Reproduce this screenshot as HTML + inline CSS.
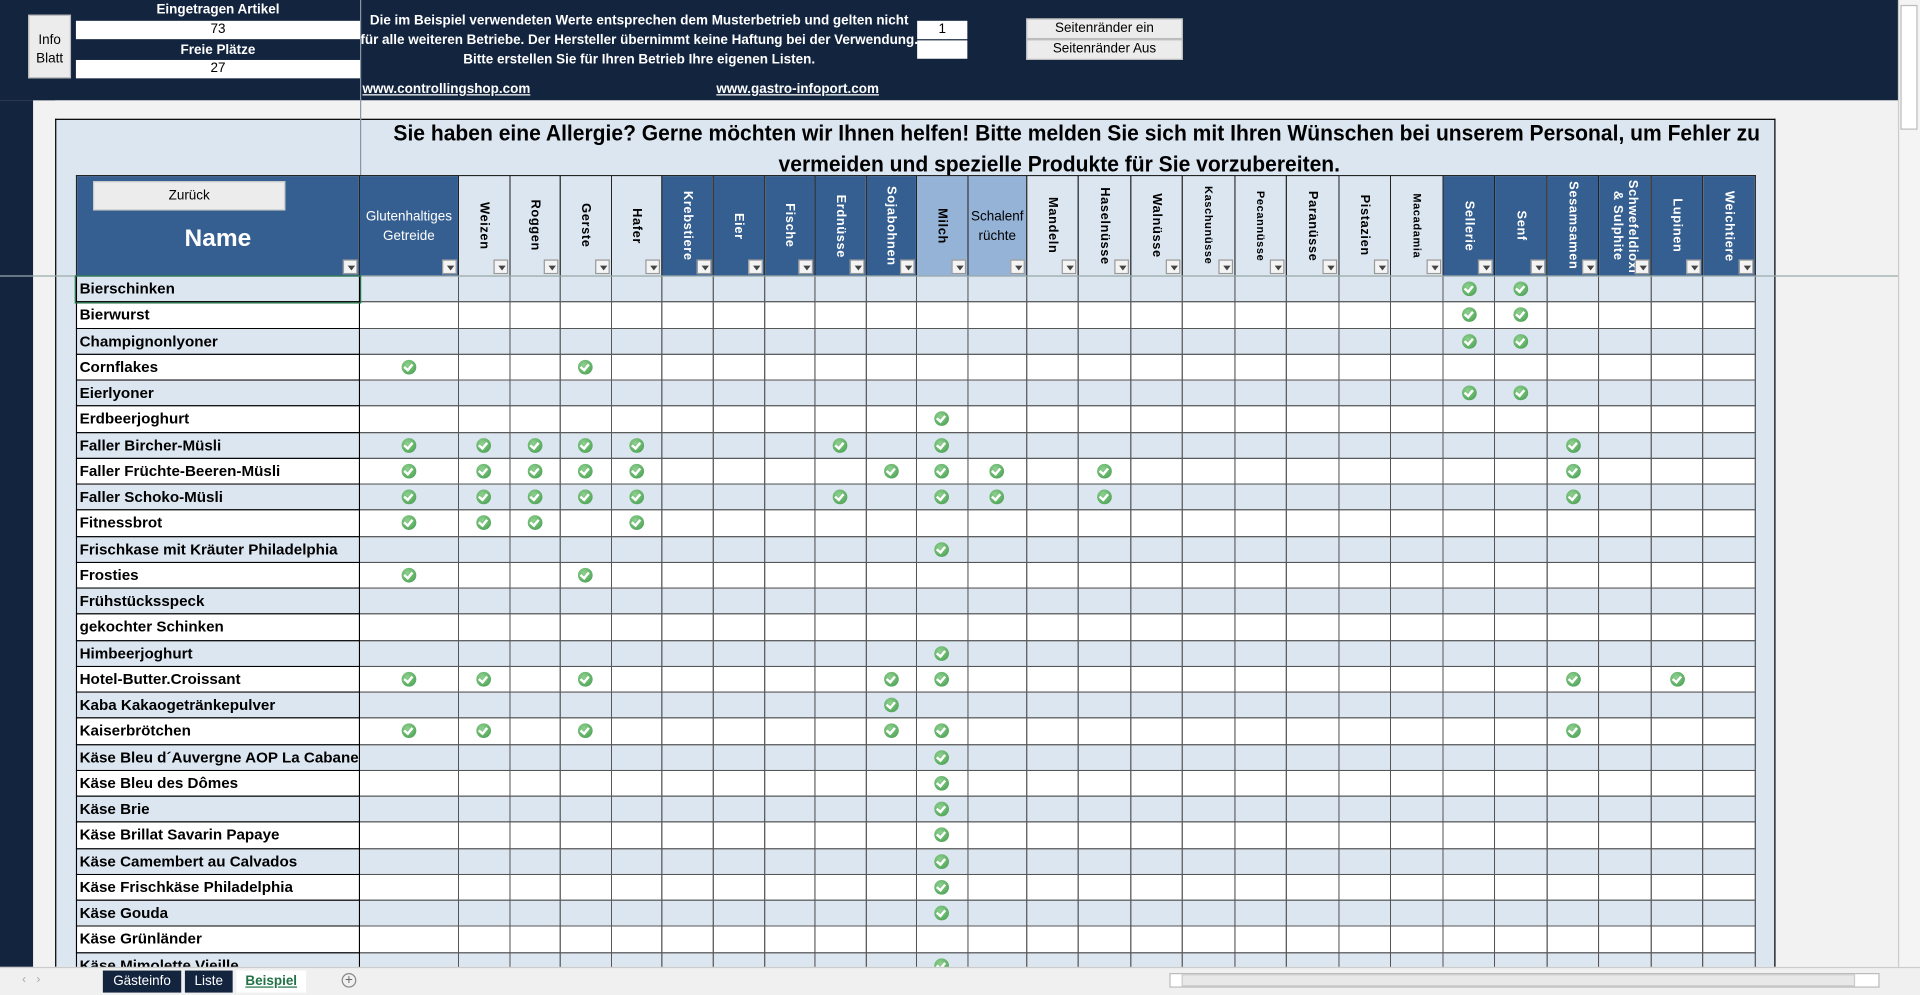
<!DOCTYPE html>
<html><head><meta charset="utf-8">
<style>
*{margin:0;padding:0;box-sizing:border-box}
html,body{width:1920px;height:995px;overflow:hidden;background:#f0f0f0;font-family:"Liberation Sans",sans-serif}
#w{position:absolute;left:0;top:0;width:1568px;height:813px;transform:scale(1.22449,1.2239);transform-origin:0 0;background:#f2f2f2}
.a{position:absolute}
.navy{background:#13243f}
.hd{color:#fff;font-weight:bold;font-size:11px;text-align:center}
.wb{background:#fff;font-size:11px;text-align:center;line-height:15px;color:#000}
.btn{background:#ececec;border:1px solid #bbb;font-size:11px;text-align:center;color:#000}
table{position:absolute;left:62px;top:143px;border-collapse:collapse;table-layout:fixed}
td{border:1px solid #555;padding:0;height:21.25px;position:relative;background:#fff}
td.n{font-weight:bold;font-size:12.4px;padding-left:2px;white-space:nowrap;overflow:hidden;border:1px solid #000}
tr.b td{background:#dce6f1}
tr.h td{height:82px;background:#dce6f1;border:1px solid #222;vertical-align:middle;text-align:center}
tr.h td.d{background:#365f91;color:#fff}
tr.h td.m{background:#95b3d7}
.v{writing-mode:vertical-rl;font-weight:bold;font-size:10.5px;letter-spacing:.5px;margin:auto;white-space:nowrap;line-height:12px}
.f{position:absolute;right:1px;bottom:1px;width:12px;height:12px;background:#f4f4f4;border:1px solid #999}
.f:after{content:"";position:absolute;left:3px;top:4px;border:3px solid transparent;border-top:4px solid #444}
.ck{position:absolute;left:50%;top:50%;width:12px;height:12px;margin:-6px 0 0 -6px;border-radius:50%;background:radial-gradient(circle at 40% 35%,#8fd08f,#3f9a4a);}
.ck:after{content:"";position:absolute;left:3px;top:2px;width:3px;height:5px;border:solid #fff;border-width:0 2px 2px 0;transform:rotate(40deg)}
.tab{position:absolute;top:793px;height:18px;font-size:11px;line-height:18px;text-align:center;color:#fff;background:#13243f}
</style></head><body><div id="w">
<div class="a navy" style="left:0;top:0;width:1550px;height:82px"></div>
<div class="a navy" style="left:0;top:82px;width:27px;height:708px"></div>
<div class="a" style="left:45px;top:82px;width:1505px;height:708px;background:#f2f2f2"></div>
<div class="a" style="left:45px;top:97px;width:1405px;height:693px;background:#dce6f1;border-left:1px solid #000;border-top:1px solid #000;border-right:1px solid #000"></div>
<div class="a" style="left:1550px;top:0;width:18px;height:790px;background:#f4f4f4;border-left:1px solid #ccc"></div>
<div class="a" style="left:1552px;top:4px;width:14px;height:102px;background:#fff;border:1px solid #bbb"></div>
<div class="a hd" style="left:62px;top:2px;width:232px">Eingetragen Artikel</div>
<div class="a wb" style="left:62px;top:17px;width:232px;height:15px">73</div>
<div class="a hd" style="left:62px;top:35px;width:232px">Freie Plätze</div>
<div class="a wb" style="left:62px;top:49px;width:232px;height:15px">27</div>
<div class="a btn" style="left:23px;top:12px;width:35px;height:52px;padding-top:13px;line-height:15px;font-size:11px">Info<br>Blatt</div>
<div class="a hd" style="left:294px;top:9px;width:456px;line-height:16px">Die im Beispiel verwendeten Werte entsprechen dem Musterbetrieb und gelten nicht<br>für alle weiteren Betriebe. Der Hersteller übernimmt keine Haftung bei der Verwendung.<br>Bitte erstellen Sie für Ihren Betrieb Ihre eigenen Listen.</div>
<div class="a hd" style="left:296px;top:67px;text-decoration:underline">www.controllingshop.com</div>
<div class="a hd" style="left:585px;top:67px;text-decoration:underline">www.gastro-infoport.com</div>
<div class="a wb" style="left:749px;top:17px;width:41px;height:15px">1</div>
<div class="a wb" style="left:749px;top:33px;width:41px;height:15px"></div>
<div class="a btn" style="left:838px;top:15px;width:128px;height:17px;line-height:15px">Seitenränder ein</div>
<div class="a btn" style="left:838px;top:32px;width:128px;height:17px;line-height:15px">Seitenränder Aus</div>
<div class="a" style="left:294px;top:0;width:1px;height:143px;background:#8a96a8"></div>
<div class="a" style="left:295px;top:97px;width:1140px;text-align:center;font-weight:bold;font-size:18px;line-height:25px;color:#000"><span style="display:inline-block;transform:scaleX(.955);white-space:nowrap">Sie haben eine Allergie? Gerne möchten wir Ihnen helfen! Bitte melden Sie sich mit Ihren Wünschen bei unserem Personal, um Fehler zu</span><br><span style="display:inline-block;transform:scaleX(.955);white-space:nowrap">vermeiden und spezielle Produkte für Sie vorzubereiten.</span></div>
<table>
<colgroup><col style="width:228px"><col style="width:81px"><col style="width:42px"><col style="width:41px"><col style="width:42px"><col style="width:41px"><col style="width:42px"><col style="width:42px"><col style="width:41px"><col style="width:42px"><col style="width:41px"><col style="width:42px"><col style="width:48px"><col span="14" style="width:42.5px"></colgroup>
<tr class="h">
<td class="d"><div style="position:absolute;left:13px;top:4px;width:157px;height:24px;background:#ececec;border:1px solid #ccc;color:#000;font-size:11px;line-height:22px">Zurück</div><div style="font-size:20px;font-weight:bold;margin-top:22px">Name</div><i class="f"></i></td>
<td class="d"><div style="font-size:11px;line-height:16px">Glutenhaltiges<br>Getreide</div><i class="f"></i></td>
<td><div class="v">Weizen</div><i class="f"></i></td>
<td><div class="v">Roggen</div><i class="f"></i></td>
<td><div class="v">Gerste</div><i class="f"></i></td>
<td><div class="v">Hafer</div><i class="f"></i></td>
<td class="d"><div class="v">Krebstiere</div><i class="f"></i></td>
<td class="d"><div class="v">Eier</div><i class="f"></i></td>
<td class="d"><div class="v">Fische</div><i class="f"></i></td>
<td class="d"><div class="v">Erdnüsse</div><i class="f"></i></td>
<td class="d"><div class="v">Sojabohnen</div><i class="f"></i></td>
<td class="m"><div class="v">Milch</div><i class="f"></i></td>
<td class="m"><div style="font-size:11px;line-height:16px">Schalenf<br>rüchte</div><i class="f"></i></td>
<td><div class="v">Mandeln</div><i class="f"></i></td>
<td><div class="v">Haselnüsse</div><i class="f"></i></td>
<td><div class="v">Walnüsse</div><i class="f"></i></td>
<td><div class="v" style="font-size:9px">Kaschunüsse</div><i class="f"></i></td>
<td><div class="v" style="font-size:9px">Pecannüsse</div><i class="f"></i></td>
<td><div class="v">Paranüsse</div><i class="f"></i></td>
<td><div class="v">Pistazien</div><i class="f"></i></td>
<td><div class="v" style="font-size:9px">Macadamia</div><i class="f"></i></td>
<td class="d"><div class="v">Sellerie</div><i class="f"></i></td>
<td class="d"><div class="v">Senf</div><i class="f"></i></td>
<td class="d"><div class="v">Sesamsamen</div><i class="f"></i></td>
<td class="d"><div class="v" style="height:76px;overflow:hidden">Schwefeldioxid<br>&amp; Sulphite</div><i class="f"></i></td>
<td class="d"><div class="v">Lupinen</div><i class="f"></i></td>
<td class="d"><div class="v">Weichtiere</div><i class="f"></i></td>
</tr>
<tbody id="tb">
<tr><td class="n">Bierschinken</td></tr>
<tr><td class="n">Bierwurst</td></tr>
<tr><td class="n">Champignonlyoner</td></tr>
<tr><td class="n">Cornflakes</td></tr>
<tr><td class="n">Eierlyoner</td></tr>
<tr><td class="n">Erdbeerjoghurt</td></tr>
<tr><td class="n">Faller Bircher-Müsli</td></tr>
<tr><td class="n">Faller Früchte-Beeren-Müsli</td></tr>
<tr><td class="n">Faller Schoko-Müsli</td></tr>
<tr><td class="n">Fitnessbrot</td></tr>
<tr><td class="n">Frischkase mit Kräuter Philadelphia</td></tr>
<tr><td class="n">Frosties</td></tr>
<tr><td class="n">Frühstücksspeck</td></tr>
<tr><td class="n">gekochter Schinken</td></tr>
<tr><td class="n">Himbeerjoghurt</td></tr>
<tr><td class="n">Hotel-Butter.Croissant</td></tr>
<tr><td class="n">Kaba Kakaogetränkepulver</td></tr>
<tr><td class="n">Kaiserbrötchen</td></tr>
<tr><td class="n">Käse Bleu d´Auvergne AOP La Cabane</td></tr>
<tr><td class="n">Käse Bleu des Dômes</td></tr>
<tr><td class="n">Käse Brie</td></tr>
<tr><td class="n">Käse Brillat Savarin Papaye</td></tr>
<tr><td class="n">Käse Camembert au Calvados</td></tr>
<tr><td class="n">Käse Frischkäse Philadelphia</td></tr>
<tr><td class="n">Käse Gouda</td></tr>
<tr><td class="n">Käse Grünländer</td></tr>
<tr><td class="n">Käse Mimolette Vieille</td></tr>
</tbody></table>
<div class="a" style="left:0;top:225px;width:1550px;height:1px;background:#9aa"></div>
<div class="a" style="left:61px;top:225px;width:234px;height:23px;border:1px solid #217346"></div>
<div class="a" style="left:0;top:790px;width:1568px;height:23px;background:#f0f0f0;border-top:1px solid #ccc"></div>
<div class="a" style="left:18px;top:795px;font-size:10px;color:#aaa">‹ &nbsp; ›</div>
<div class="tab" style="left:84px;width:64px">Gästeinfo</div>
<div class="tab" style="left:151px;width:39px">Liste</div>
<div class="tab" style="left:193px;width:57px;background:#fff;color:#217346;font-weight:bold;text-decoration:underline">Beispiel</div>
<div class="a" style="left:279px;top:795px;width:12px;height:12px;border:1px solid #888;border-radius:50%;font-size:11px;line-height:10px;text-align:center;color:#666">+</div>
<div class="a" style="left:955px;top:795px;width:580px;height:12px;background:#fff;border:1px solid #bbb"></div>
<div class="a" style="left:965px;top:796px;width:550px;height:10px;background:#e8e8e8;border:1px solid #ccc"></div>
</div>
<script>
var d=[[20,21],[20,21],[20,21],[0,3],[20,21],[10],[0,1,2,3,4,8,10,22],[0,1,2,3,4,9,10,11,13,22],[0,1,2,3,4,8,10,11,13,22],[0,1,2,4],[10],[0,3],[],[],[10],[0,1,3,9,10,22,24],[9],[0,1,3,9,10,22],[10],[10],[10],[10],[10],[10],[10],[],[10]];
var rows=document.querySelectorAll('#tb tr');
rows.forEach(function(r,i){if(i%2==0)r.className='b';for(var c=0;c<26;c++){var td=document.createElement('td');if(d[i].indexOf(c)>=0){var s=document.createElement('span');s.className='ck';td.appendChild(s);}r.appendChild(td);}});
</script>
</body></html>
